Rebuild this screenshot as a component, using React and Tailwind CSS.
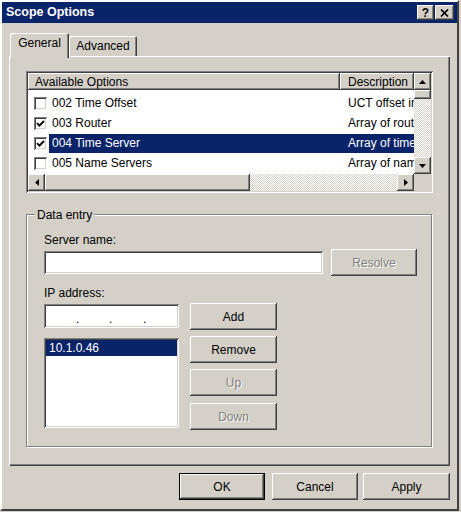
import React from "react";

const RAISED =
  "bg-[#d4d0c8] shadow-[inset_-1px_-1px_0_#404040,inset_1px_1px_0_#ffffff,inset_-2px_-2px_0_#808080,inset_2px_2px_0_#d4d0c8]";
const SUNKEN =
  "shadow-[inset_1px_1px_0_#808080,inset_-1px_-1px_0_#ffffff,inset_2px_2px_0_#404040,inset_-2px_-2px_0_#d4d0c8]";
const DITHER =
  "bg-[image:repeating-conic-gradient(#ffffff_0%_25%,#d4d0c8_0%_50%)] bg-size-[2px_2px]";
const DISABLED = "text-[#808080] [text-shadow:1px_1px_0_#ffffff]";

function Arrow({ dir }) {
  if (dir === "up")
    return (
      <svg width="7" height="4" viewBox="0 0 7 4">
        <polygon points="3.5,0 7,4 0,4" fill="#000" />
      </svg>
    );
  if (dir === "down")
    return (
      <svg width="7" height="4" viewBox="0 0 7 4">
        <polygon points="0,0 7,0 3.5,4" fill="#000" />
      </svg>
    );
  if (dir === "left")
    return (
      <svg width="4" height="7" viewBox="0 0 4 7">
        <polygon points="4,0 4,7 0,3.5" fill="#000" />
      </svg>
    );
  return (
    <svg width="4" height="7" viewBox="0 0 4 7">
      <polygon points="0,0 4,3.5 0,7" fill="#000" />
    </svg>
  );
}

function Check({ checked }) {
  return (
    <div className={`w-[13px] h-[13px] bg-white shrink-0 flex items-center justify-center ${SUNKEN}`}>
      {checked && (
        <svg width="9" height="9" viewBox="0 0 9 9">
          <path d="M1 4.2 L3.4 6.6 L8 2" stroke="#000" strokeWidth="1.9" fill="none" />
        </svg>
      )}
    </div>
  );
}

const rows = [
  { name: "002 Time Offset", desc: "UCT offset in seconds", checked: false },
  { name: "003 Router", desc: "Array of router addresses ordered by preference", checked: true },
  { name: "004 Time Server", desc: "Array of time server addresses, by preference", checked: true, sel: true },
  { name: "005 Name Servers", desc: "Array of name servers [IEN 116], by preference", checked: false },
];

export default function App() {
  return (
    <div className="w-[461px] h-[512px] bg-[#d4d0c8] overflow-hidden font-['Liberation_Sans',Arial,sans-serif] text-[12px] leading-[14px] text-black">
      <div className="w-[459px] h-[511px] flex flex-col border-2 border-t-[#ffffff] border-l-[#ffffff] border-r-[#404040] border-b-[#404040]">
        {/* Title bar */}
        <div className="h-[21px] bg-[#0a246a] flex items-center pl-[4px] pr-[3px] shrink-0">
          <span className="text-white font-bold text-[12.5px] leading-[15px]">Scope Options</span>
          <div className="ml-auto flex gap-[1px]">
            <div className={`w-[17px] h-[15px] flex items-center justify-center ${RAISED}`}>
              <span className="font-bold text-[12px] leading-[12px] pt-[1px]">?</span>
            </div>
            <div className={`w-[19px] h-[15px] flex items-center justify-center ${RAISED}`}>
              <svg width="9" height="8" viewBox="0 0 9 8">
                <path d="M1 0.5 L8 7.5 M8 0.5 L1 7.5" stroke="#000" strokeWidth="1.7" />
              </svg>
            </div>
          </div>
        </div>

        <div className="px-[7px] flex flex-col">
          {/* Tabs */}
          <div className="mt-[10px] h-[23px] flex items-end pl-[1px]">
            <div className="relative z-10 w-[59px] h-[25px] -mb-[2px] bg-[#d4d0c8] rounded-t-[2px] shadow-[inset_1px_1px_0_#ffffff,inset_-1px_0_0_#404040,inset_-2px_0_0_#808080] flex justify-center pt-[3px]">
              General
            </div>
            <div className="w-[68px] h-[20px] bg-[#d4d0c8] rounded-t-[2px] shadow-[inset_1px_1px_0_#ffffff,inset_-1px_0_0_#404040,inset_-2px_0_0_#808080] flex justify-center pt-[3px]">
              Advanced
            </div>
          </div>

          {/* Panel */}
          <div className="h-[410px] flex flex-col pt-[15px] pl-[17px] shadow-[inset_1px_1px_0_#ffffff,inset_-1px_-1px_0_#404040,inset_-2px_-2px_0_#808080]">
            {/* List view */}
            <div className={`w-[407px] h-[122px] p-[2px] ${SUNKEN}`}>
              <div className="grid grid-cols-[386px_17px] grid-rows-[101px_17px]">
                <div className="bg-white overflow-hidden flex flex-col">
                  <div className="h-[17px] flex shrink-0">
                    <div className={`w-[312px] h-[17px] pl-[7px] flex items-center ${RAISED}`}>Available Options</div>
                    <div className={`flex-1 h-[17px] pl-[8px] flex items-center ${RAISED}`}>Description</div>
                  </div>
                  <div className="pt-[3px] flex flex-col">
                    {rows.map((r) => (
                      <div key={r.name} className="h-[20px] flex items-center pl-[6px] whitespace-nowrap">
                        <Check checked={r.checked} />
                        <div
                          className={`ml-[2px] h-[19px] flex-1 flex items-center overflow-hidden ${
                            r.sel ? "bg-[#0a246a] text-white" : ""
                          }`}
                        >
                          <div className="w-[291px] pl-[3px] shrink-0">{r.name}</div>
                          <div className="pl-[8px]">{r.desc}</div>
                        </div>
                      </div>
                    ))}
                  </div>
                </div>
                {/* vertical scrollbar */}
                <div className="flex flex-col">
                  <div className={`h-[17px] flex items-center justify-center ${RAISED}`}>
                    <Arrow dir="up" />
                  </div>
                  <div className={`h-[9px] ${RAISED}`} />
                  <div className={`flex-1 ${DITHER}`} />
                  <div className={`h-[17px] flex items-center justify-center ${RAISED}`}>
                    <Arrow dir="down" />
                  </div>
                </div>
                {/* horizontal scrollbar */}
                <div className="flex">
                  <div className={`w-[17px] flex items-center justify-center ${RAISED}`}>
                    <Arrow dir="left" />
                  </div>
                  <div className={`w-[205px] ${RAISED}`} />
                  <div className={`flex-1 ${DITHER}`} />
                  <div className={`w-[17px] flex items-center justify-center ${RAISED}`}>
                    <Arrow dir="right" />
                  </div>
                </div>
                <div className="bg-[#d4d0c8]" />
              </div>
            </div>

            {/* Group box */}
            <div className="mt-[21px] w-[406px] h-[233px] border border-[#808080] shadow-[inset_1px_1px_0_#ffffff,1px_1px_0_#ffffff] flex flex-col pl-[16px]">
              <div className="-mt-[7px] -ml-[8px] self-start px-[2px] bg-[#d4d0c8]">Data entry</div>
              <div className="mt-[11px] pl-[1px]">Server name:</div>
              <div className="mt-[2px] h-[27px] flex items-center pl-[1px]">
                <div className={`w-[279px] h-[23px] bg-white ${SUNKEN}`} />
                <div className={`ml-[8px] w-[86px] h-[27px] flex items-center justify-center ${RAISED} ${DISABLED}`}>
                  Resolve
                </div>
              </div>
              <div className="mt-[10px] pl-[1px]">IP address:</div>
              <div className="mt-[3px] flex pl-[1px]">
                <div className="flex flex-col w-[135px]">
                  <div className={`mt-[1px] h-[24px] bg-white flex items-center pl-[32px] pt-[6px] text-black ${SUNKEN}`}>
                    <span className="w-[33px]">.</span>
                    <span className="w-[34px]">.</span>
                    <span>.</span>
                  </div>
                  <div className={`mt-[10px] h-[90px] bg-white p-[2px] ${SUNKEN}`}>
                    <div className="h-[16px] bg-[#0a246a] text-white pl-[3px] flex items-center">10.1.0.46</div>
                  </div>
                </div>
                <div className="ml-[11px] flex flex-col">
                  <div className={`w-[87px] h-[27px] flex items-center justify-center ${RAISED}`}>Add</div>
                  <div className={`mt-[6px] w-[87px] h-[27px] flex items-center justify-center ${RAISED}`}>Remove</div>
                  <div className={`mt-[6px] w-[87px] h-[27px] flex items-center justify-center ${RAISED} ${DISABLED}`}>Up</div>
                  <div className={`mt-[7px] w-[87px] h-[27px] flex items-center justify-center ${RAISED} ${DISABLED}`}>Down</div>
                </div>
              </div>
            </div>
          </div>

          {/* Bottom buttons */}
          <div className="mt-[7px] flex justify-end">
            <div className="w-[86px] h-[27px] border border-black">
              <div className={`w-full h-full flex items-center justify-center ${RAISED}`}>OK</div>
            </div>
            <div className={`ml-[7px] w-[86px] h-[27px] flex items-center justify-center ${RAISED}`}>Cancel</div>
            <div className={`ml-[5px] w-[87px] h-[27px] flex items-center justify-center ${RAISED}`}>Apply</div>
          </div>
        </div>
      </div>
    </div>
  );
}
